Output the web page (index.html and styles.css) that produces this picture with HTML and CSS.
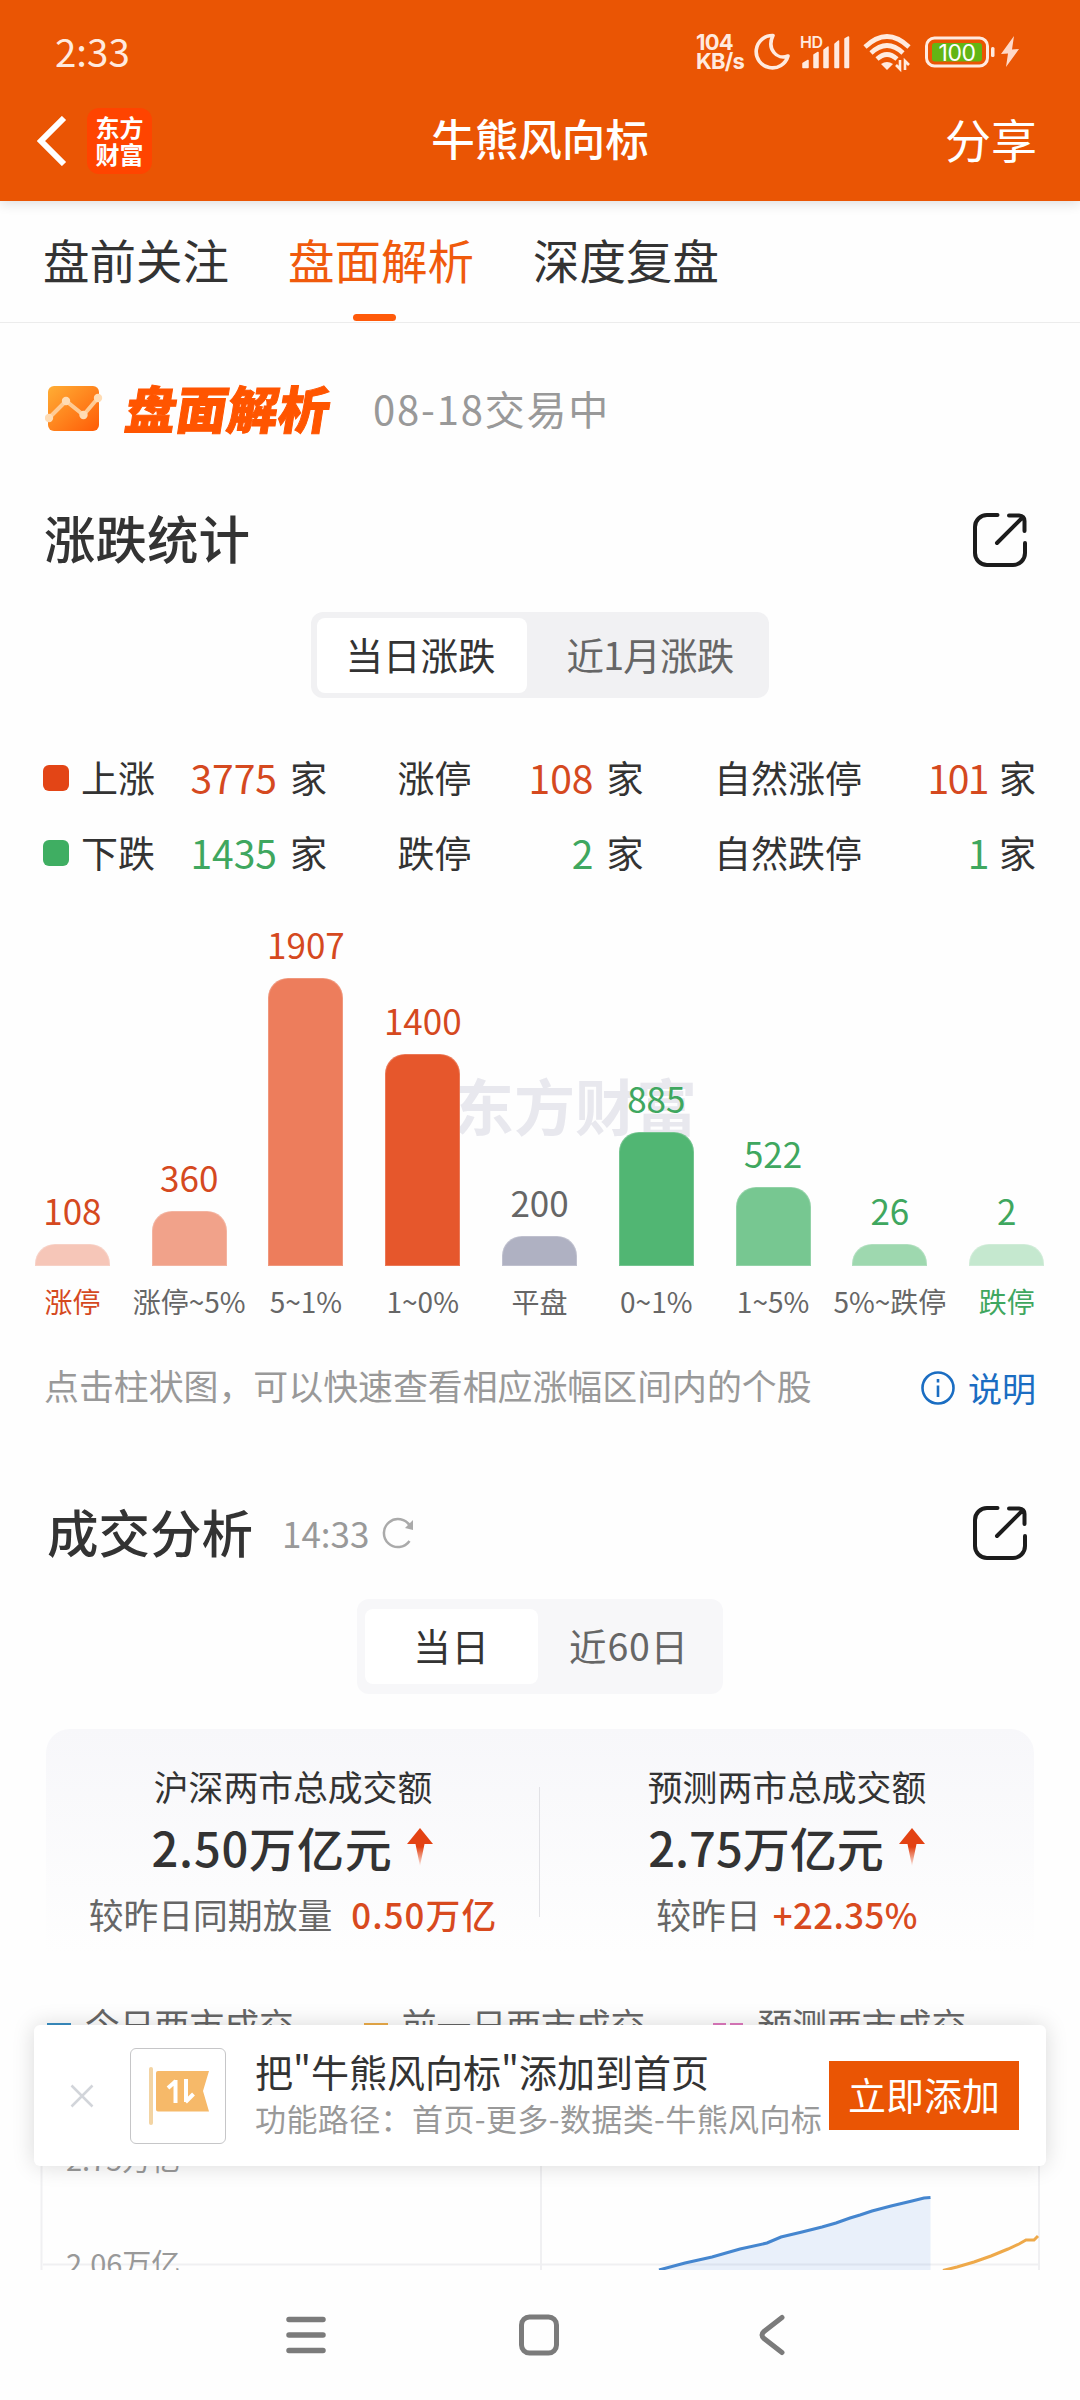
FILE: index.html
```html
<!DOCTYPE html>
<html lang="zh-CN">

<head>
    <meta charset="UTF-8">
    <meta name="viewport" content="width=device-width, initial-scale=1.0">
    <title>牛熊风向标</title>
    <link rel="stylesheet" href="styles.css">
</head>

<body>
    <div class="app">
        <header class="header">
            <div class="status-bar">
                <span class="time">2:33</span>
                <div class="status-icons">
                    <div class="net-speed"><span>104</span><span>KB/s</span></div>
                    <svg class="icon-moon" width="36" height="38" viewBox="0 0 36 38" fill="none" stroke="#ffeadf" stroke-width="3.600" stroke-linejoin="round"><path d="M19 2.500A16.200 16.200 0 1 0 34 23C23 27.500 12.500 16 19 2.500Z"/></svg>
                    <svg class="icon-signal" width="52" height="34" viewBox="0 0 52 34" fill="#ffeadf">
                        <text x="0" y="13" font-size="16" font-weight="600">HD</text>
                        <path d="M3 32.500v-4l5-3v7zM14 32.500V20l4-2.500v15zM24 32.500V15l4-3v20.500zM35 32.500V9l3.500-3v26.500zM45 32.500V4l3.500-2v30.500z" stroke="#ffeadf" stroke-width="1.500" stroke-linejoin="round"/>
                    </svg>
                    <svg class="icon-wifi" width="48" height="38" viewBox="0 0 48 38" fill="none" stroke="#ffeadf" stroke-width="4.600">
                        <path d="M2 14Q24 -7 46 14M8 20Q24 5 40 20M14 26Q24 17 34 26"/>
                        <path d="M18 31Q24 27 30 31L24 37Z" fill="#ffeadf" stroke="none"/>
                        <path d="M37 27v9l-4-4M42 37v-9l4 4" stroke-width="2.600"/>
                    </svg>
                    <svg class="icon-battery" width="70" height="32" viewBox="0 0 70 32">
                        <rect x="1.500" y="2" width="61" height="28" rx="8" fill="none" stroke="#ffeadf" stroke-width="3"/>
                        <rect x="7" y="7" width="50" height="18.500" rx="3" fill="#62b514"/>
                        <rect x="66" y="11" width="3.500" height="10" rx="1.500" fill="#ffeadf"/>
                        <text x="32" y="24.500" text-anchor="middle" font-size="23" fill="#fff">100</text>
                    </svg>
                    <svg class="icon-bolt" width="18" height="32" viewBox="0 0 18 32" fill="#ffd9c8"><path d="M13 0L0 18l7-.5L5 31 18 13l-7 .5z"/></svg>
                </div>
            </div>
            <div class="nav-bar">
                <div class="nav-left">
                    <svg width="30" height="50" viewBox="0 0 30 50" fill="none" stroke="#fff" stroke-width="6"><path d="M27 2L4 25l23 23"/></svg>
                    <div class="logo"><span>东方</span><span>财富</span></div>
                </div>
                <h1>牛熊风向标</h1>
                <span class="share">分享</span>
            </div>
        </header>

        <nav class="tabs">
            <a>盘前关注</a>
            <a class="active">盘面解析</a>
            <a>深度复盘</a>
        </nav>

        <div class="page-title">
            <svg width="58" height="48" viewBox="0 0 58 48">
                <defs>
                    <linearGradient id="iconFill" x1="0" y1="0" x2="1" y2="1">
                        <stop offset="0" stop-color="#ffae35"/>
                        <stop offset="1" stop-color="#ff5b06"/>
                    </linearGradient>
                </defs>
                <rect x="3" y="1" width="51" height="45" rx="6" fill="url(#iconFill)"/>
                <path d="M4 33L21 16l17.500 14L53 13" fill="none" stroke="#ffcb94" stroke-width="4"/>
                <g fill="#ffdcb4"><circle cx="4" cy="33" r="4.200"/><circle cx="21" cy="16" r="4.200"/><circle cx="38.500" cy="30" r="4.200"/><circle cx="53" cy="13" r="4.200"/></g>
            </svg>
            <strong>盘面解析</strong>
            <span>08-18交易中</span>
        </div>

        <section class="rise-fall">
            <div class="section-head">
                <h2>涨跌统计</h2>
                <svg class="icon-open" width="54" height="54" viewBox="0 0 54 54"><path d="M24.500 2H14A12 12 0 0 0 2 14V40A12 12 0 0 0 14 52H40A12 12 0 0 0 52 40V30M36 2.500H46Q51.500 3 51.500 8V18M50 4L24 30"/></svg>
            </div>
            <div class="segment">
                <span class="on">当日涨跌</span>
                <span>近1月涨跌</span>
            </div>

            <div class="counts">
                <div class="count-row up">
                    <div class="count first"><i></i><span>上涨</span><b>3775</b><span>家</span></div>
                    <div class="count second"><span>涨停</span><b>108</b><span>家</span></div>
                    <div class="count third"><span>自然涨停</span><b>101</b><span>家</span></div>
                </div>
                <div class="count-row down">
                    <div class="count first"><i></i><span>下跌</span><b>1435</b><span>家</span></div>
                    <div class="count second"><span>跌停</span><b>2</b><span>家</span></div>
                    <div class="count third"><span>自然跌停</span><b>1</b><span>家</span></div>
                </div>
            </div>

            <div class="bar-chart">
                <div class="watermark">东方财富</div>
                <div class="col red"><b>108</b><div class="bar r1" style="height: 22px"></div><span class="red">涨停</span></div>
                <div class="col red"><b>360</b><div class="bar r2" style="height: 55px"></div><span>涨停~5%</span></div>
                <div class="col red"><b>1907</b><div class="bar r3" style="height: 288px"></div><span>5~1%</span></div>
                <div class="col red"><b>1400</b><div class="bar r4" style="height: 212px"></div><span>1~0%</span></div>
                <div class="col"><b>200</b><div class="bar flat" style="height: 30px"></div><span>平盘</span></div>
                <div class="col green"><b>885</b><div class="bar g4" style="height: 134px"></div><span>0~1%</span></div>
                <div class="col green"><b>522</b><div class="bar g3" style="height: 79px"></div><span>1~5%</span></div>
                <div class="col green"><b>26</b><div class="bar g2" style="height: 22px"></div><span>5%~跌停</span></div>
                <div class="col green"><b>2</b><div class="bar g1" style="height: 22px"></div><span class="green">跌停</span></div>
            </div>

            <div class="hint">
                <span>点击柱状图，可以快速查看相应涨幅区间内的个股</span>
                <a>
                    <svg width="34" height="34" viewBox="0 0 34 34" fill="none" stroke="#1a6dc2" stroke-width="2.600"><circle cx="17" cy="17" r="15.500"/><path d="M17 14.500V26M17 8v3.500"/></svg>
                    <span>说明</span>
                </a>
            </div>
        </section>

        <section class="turnover">
            <div class="section-head">
                <h2>成交分析</h2>
                <span class="update-time">14:33</span>
                <svg class="icon-refresh" width="34" height="32" viewBox="0 0 34 32" fill="none" stroke="#aaa" stroke-width="2.500"><path d="M28.500 24A14 14 0 1 1 29 9"/><path d="M32 3v10l-8-2z" fill="#aaa" stroke="none"/></svg>
                <svg class="icon-open" width="54" height="54" viewBox="0 0 54 54"><path d="M24.500 2H14A12 12 0 0 0 2 14V40A12 12 0 0 0 14 52H40A12 12 0 0 0 52 40V30M36 2.500H46Q51.500 3 51.500 8V18M50 4L24 30"/></svg>
            </div>
            <div class="segment light">
                <span class="on">当日</span>
                <span>近60日</span>
            </div>

            <div class="summary">
                <div class="summary-item">
                    <div class="label">沪深两市总成交额</div>
                    <div class="amount wide">2.50万亿元
                        <svg width="28" height="40" viewBox="0 0 28 40">
                            <defs>
                                <linearGradient id="arrowFill" x1="0" y1="0" x2="0" y2="1">
                                    <stop offset="0.500" stop-color="#e34213"/>
                                    <stop offset="1" stop-color="#e34213" stop-opacity="0.100"/>
                                </linearGradient>
                            </defs>
                            <path d="M14 1L27 17H18.500L14 39 9.500 17H1z" fill="url(#arrowFill)"/>
                        </svg>
                    </div>
                    <div class="compare wide">较昨日同期放量 <b>0.50万亿</b></div>
                </div>
                <div class="summary-item">
                    <div class="label">预测两市总成交额</div>
                    <div class="amount">2.75万亿元
                        <svg width="28" height="40" viewBox="0 0 28 40"><path d="M14 1L27 17H18.500L14 39 9.500 17H1z" fill="url(#arrowFill)"/></svg>
                    </div>
                    <div class="compare">较昨日 <b>+22.35%</b></div>
                </div>
            </div>

            <div class="legend">
                <span class="today"><i></i>今日两市成交</span>
                <span class="prev"><i></i>前一日两市成交</span>
                <span class="forecast"><i></i>预测两市成交</span>
            </div>
            <svg class="line-chart" width="1080" height="224" viewBox="0 2046 1080 224">
                <path d="M41.500 2046V2270M541 2046V2270M1039 2046V2270M43 2161H1039M43 2264.500H1039" stroke="#f0f0f2" stroke-width="2" fill="none"/>
                <path d="M659 2270L685 2263 712 2257 740 2249 767 2243 781 2237 802 2232 822 2227 836 2223 850 2218 860 2215 872 2211 891 2206 912 2201 924 2198 930.500 2197.500V2270z" fill="#3f83dc" fill-opacity="0.110"/>
                <path d="M659 2270L685 2263 712 2257 740 2249 767 2243 781 2237 802 2232 822 2227 836 2223 850 2218 860 2215 872 2211 891 2206 912 2201 924 2198 930.500 2197.500" fill="none" stroke="#4586cf" stroke-width="3"/>
                <path d="M943 2270.500L957 2267 974 2262 991 2256 1008 2249 1019 2244 1026 2240H1034L1038 2236" fill="none" stroke="#eea94a" stroke-width="3"/>
                <g fill="#999" font-size="29">
                    <text x="66" y="2171">2.75万亿</text>
                    <text x="66" y="2275">2.06万亿</text>
                </g>
            </svg>
        </section>

        <footer class="system-nav">
            <svg width="40" height="42" viewBox="0 0 40 42" stroke="#7b7b7b" stroke-width="5.500" stroke-linecap="round"><path d="M3 5.500H37M3 21H37M3 36.500H37"/></svg>
            <svg class="home" width="42" height="42" viewBox="0 0 42 42" fill="none" stroke="#7b7b7b" stroke-width="5"><rect x="3.500" y="3" width="35" height="36" rx="8"/></svg>
            <svg width="28" height="42" viewBox="0 0 28 42" fill="none" stroke="#7b7b7b" stroke-width="5" stroke-linecap="round"><path d="M24 3.500L6 17.500Q2 21 6 24.500L24 38.500"/></svg>
        </footer>

        <!-- floating "add to home" prompt -->
        <div class="add-banner">
            <svg class="close" width="24" height="24" viewBox="0 0 24 24" stroke="#d2d5da" stroke-width="2.500"><path d="M1.500 1.500l21 21M22.500 1.500l-21 21"/></svg>
            <div class="flag">
                <svg width="62" height="58" viewBox="0 0 62 58">
                    <rect x="1" y="0" width="4" height="58" rx="2" fill="#f3d4a3"/>
                    <path d="M8 6Q8 4 10 4H61L55 24 61 44.500H10Q8 44.500 8 42.500z" fill="#f6b969"/>
                    <path d="M27.500 13v23M28 14l-8 7M38 12v23M37.500 35l8-8" fill="none" stroke="#fff" stroke-width="4"/>
                </svg>
            </div>
            <div class="banner-text">
                <p class="main">把"牛熊风向标"添加到首页</p>
                <p class="path">功能路径：首页-更多-数据类-牛熊风向标</p>
            </div>
            <button>立即添加</button>
        </div>
    </div>
</body>

</html>
```
FILE: styles.css
```css
* {
    box-sizing: border-box;
    margin: 0;
    padding: 0;
}

body {
    font-family: "Noto Sans CJK SC", "Noto Sans", sans-serif;
    background: #fff;
    color: #333;
}

svg {
    display: block;
    flex-shrink: 0;
}

i {
    display: block;
}

b {
    font-weight: 400;
}

.app {
    position: relative;
    width: 1080px;
    height: 2400px;
    overflow: hidden;
    background: #fefefe;
    white-space: nowrap;
}

/* header */
.header {
    height: 201px;
    background: #ea5504;
    color: #fff;
    box-shadow: 0 2px 12px rgba(0, 0, 0, 0.14);
}

.status-bar {
    display: flex;
    justify-content: space-between;
    align-items: center;
    height: 80px;
    padding: 24px 61px 0 55px;
    color: #ffeadf;
}

.time {
    padding-bottom: 4px;
    font-size: 38.500px;
    line-height: 40px;
}

.status-icons {
    display: flex;
    align-items: center;
}

.status-icons svg {
    overflow: visible;
}

.net-speed {
    display: flex;
    flex-direction: column;
    width: 58px;
    padding-bottom: 1px;
    font-family: Inter, sans-serif;
    font-size: 22px;
    font-weight: 700;
    letter-spacing: -0.800px;
    line-height: 19px;
}

.icon-signal {
    margin-left: 10px;
}

.icon-signal text,
.icon-battery text {
    font-family: Inter, sans-serif;
    letter-spacing: -0.500px;
}

.icon-wifi {
    margin-left: 11px;
}

.icon-battery {
    margin-left: 14px;
}

.icon-bolt {
    margin-left: 6px;
}

.nav-bar {
    display: grid;
    grid-template-columns: 1fr auto 1fr;
    align-items: center;
    height: 121px;
    padding: 0 43px 0 37px;
}

.nav-left {
    display: flex;
    align-items: center;
    gap: 20px;
}

.nav-bar h1 {
    padding: 0 0 5px 6px;
    font-size: 43.500px;
    font-weight: 500;
    line-height: 50px;
}

.logo {
    display: flex;
    flex-direction: column;
    justify-content: center;
    align-items: center;
    width: 65px;
    height: 66px;
    padding-bottom: 2px;
    border-radius: 12px;
    background: #ff4400;
    font-size: 24px;
    font-weight: 700;
    line-height: 27px;
}

.share {
    justify-self: end;
    padding-bottom: 5px;
    font-size: 46px;
    line-height: 50px;
}

/* tabs */
.tabs {
    display: flex;
    gap: 59px;
    height: 122px;
    padding-left: 43px;
    border-bottom: 1px solid #ececec;
    font-size: 46.500px;
    line-height: 116px;
}

.tabs a {
    display: flex;
    flex-direction: column;
    align-items: center;
    height: 121px;
}

.tabs .active {
    color: #f05a0c;
}

.tabs .active::after {
    content: "";
    width: 43px;
    height: 7px;
    margin: -3px 14px 0 0;
    border-radius: 4px;
    background: #ff5a0a;
}

.page-title {
    display: flex;
    align-items: center;
    height: 172px;
    padding-left: 45px;
}

.page-title strong {
    margin-left: 23px;
    padding-bottom: 5px;
    font-size: 51px;
    font-weight: 900;
    line-height: 60px;
    color: #ff5500;
    -webkit-text-stroke: 1px #ff5500;
    transform: skewX(-9deg);
}

.page-title span {
    margin-left: 43px;
    padding-bottom: 3px;
    font-size: 40px;
    letter-spacing: 1.800px;
    line-height: 50px;
    color: #999;
}

/* sections */
.section-head {
    display: flex;
    align-items: center;
    height: 88px;
    padding: 0 53px 0 44px;
}

.section-head h2 {
    padding-bottom: 4px;
    font-size: 51.500px;
    font-weight: 500;
    line-height: 60px;
}

.icon-open {
    margin-left: auto;
    margin-top: 2px;
    fill: none;
    stroke: #1c1c1c;
    stroke-width: 4;
    stroke-linecap: round;
}

.turnover .icon-open {
    margin-top: 0;
}

.segment {
    display: flex;
    width: 458px;
    height: 86px;
    margin: 29px auto 0 311px;
    padding: 6px;
    border-radius: 12px;
    background: #f1f1f3;
    font-size: 37.500px;
    line-height: 71px;
    text-align: center;
    color: #666;
}

.segment span {
    flex: 1;
    height: 75px;
    padding-left: 10px;
    letter-spacing: -0.800px;
}

.segment .on {
    flex: none;
    width: 210px;
    padding: 0 3px 0 0;
    border-radius: 8px;
    letter-spacing: 0;
    background: #fff;
    color: #333;
}

.segment.light {
    width: 366px;
    height: 95px;
    margin: 22px auto 0 357px;
    padding: 10px 8px;
    background: #f7f7f9;
}

.segment.light span {
    padding-left: 5px;
    letter-spacing: 0.800px;
}

.segment.light .on {
    width: 173px;
    padding: 0;
}

/* up / down counts */
.counts {
    margin-top: 43px;
}

.count-row {
    display: flex;
    justify-content: space-between;
    height: 75px;
    padding: 0 44px 0 43px;
    font-size: 37px;
    line-height: 72px;
}

.count {
    display: flex;
}

.count b {
    flex: 1;
    padding-right: 13px;
    text-align: right;
    font-size: 39px;
}

.count i {
    width: 26px;
    height: 26px;
    margin: 24px 12px 0 0;
    border-radius: 6px;
}

.first {
    width: 284px;
}

.second {
    width: 246px;
}

.third {
    width: 322px;
}

.count-row .third b {
    padding-right: 11px;
    letter-spacing: -1.500px;
}

.up i {
    background: #e34516;
}

.up b,
.red {
    color: #d5491f;
}

.down i {
    background: #3fae62;
}

.down b,
.green {
    color: #3fa75f;
}

/* bar chart */
.bar-chart {
    position: relative;
    display: flex;
    height: 431px;
    padding: 0 15px 0 14px;
}

.watermark {
    position: absolute;
    left: 453px;
    top: 178px;
    font-size: 61px;
    font-weight: 700;
    line-height: 72px;
    color: #e8e8ee;
}

.col {
    position: relative;
    flex: 1;
    display: flex;
    flex-direction: column;
    justify-content: flex-end;
    align-items: center;
}

.col b {
    margin-bottom: 11px;
    font-size: 35px;
    line-height: 46px;
}

.col span {
    height: 40px;
    margin-top: 16px;
    font-size: 28px;
    line-height: 39px;
}

.col span:not(.red):not(.green),
.col:not(.red):not(.green) b {
    color: #666;
}

.bar {
    width: 75px;
    border: 1px solid rgba(255, 255, 255, 0.2);
    border-radius: 20px 20px 0 0;
}

.r1 { background: #f6c6b8; }
.r2 { background: #f1a28a; }
.r3 { background: #ed7d5c; }
.r4 { background: #e6572c; }
.flat { background: #afb1c2; }
.g4 { background: #51b673; }
.g3 { background: #77c791; }
.g2 { background: #9ed8af; }
.g1 { background: #c5e8cf; }

.hint {
    display: flex;
    justify-content: space-between;
    align-items: center;
    height: 50px;
    margin: 40px 44px 77px;
    font-size: 34.900px;
    line-height: 46px;
    color: #999;
}

.hint > span {
    padding-bottom: 4px;
}

.hint a {
    display: flex;
    align-items: center;
    gap: 13px;
    padding-top: 2px;
    font-size: 34px;
    color: #1a6dc2;
}

/* turnover */
.turnover .section-head {
    padding-left: 47px;
}

.update-time {
    margin-left: 29px;
    padding-bottom: 2px;
    font-size: 35px;
    color: #999;
}

.icon-refresh {
    margin-left: 12px;
}

.summary {
    display: flex;
    width: 988px;
    height: 224px;
    margin: 35px auto 0 46px;
    padding-top: 35px;
    border-radius: 24px 24px 0 0;
    background: linear-gradient(#f7f7fa, #fefefe);
}

.summary-item {
    flex: 1;
    display: flex;
    flex-direction: column;
    align-items: center;
}

.summary-item + .summary-item {
    position: relative;
}

.summary-item + .summary-item::before {
    content: "";
    position: absolute;
    left: -1px;
    top: 23px;
    width: 1px;
    height: 130px;
    background: #e2e2e6;
}

.label {
    font-size: 34.800px;
    line-height: 44px;
}

.amount {
    display: flex;
    align-items: center;
    gap: 14px;
    margin-top: 9px;
    font-size: 47px;
    font-weight: 500;
    line-height: 60px;
}

.amount.wide {
    letter-spacing: 0.800px;
}

.compare {
    display: flex;
    gap: 12px;
    margin-top: 15px;
    font-size: 34.800px;
    line-height: 44px;
    color: #666;
}

.compare.wide {
    gap: 19px;
}

.compare b {
    font-weight: 500;
    letter-spacing: 0.400px;
    color: #d84a1e;
}

.compare.wide b {
    letter-spacing: 1.100px;
}

.legend {
    display: flex;
    height: 40px;
    margin: 53px 47px 0;
    font-size: 34.800px;
    line-height: 36px;
    color: #666;
}

.legend span {
    display: flex;
    gap: 14px;
}

.legend i {
    width: 24px;
    height: 4px;
    margin-top: 17px;
    background: #3a8fc4;
}

.legend .prev {
    margin-left: 70px;
}

.legend .prev i {
    background: #eeae4a;
}

.legend .forecast {
    margin-left: 68px;
}

.legend .forecast i {
    width: 30px;
    background: linear-gradient(90deg, #e07bc0 13px, transparent 13px, transparent 17px, #e07bc0 17px);
}

.system-nav {
    display: flex;
    align-items: center;
    height: 130px;
    padding: 0 294px 0 286px;
    justify-content: space-between;
}

.system-nav .home {
    margin-right: 6px;
}

/* floating banner */
.add-banner {
    position: absolute;
    left: 34px;
    top: 2025px;
    display: flex;
    align-items: center;
    width: 1012px;
    height: 141px;
    padding: 0 27px 0 36px;
    border-radius: 6px;
    background: #fff;
    box-shadow: 0 0 22px rgba(0, 0, 0, 0.15);
}

.flag {
    display: flex;
    align-items: center;
    width: 96px;
    height: 96px;
    margin-left: 36px;
    padding-left: 17px;
    border: 1px solid #c6c6c8;
    border-radius: 6px;
}

.banner-text {
    flex: 1;
    width: 0;
    margin-left: 29px;
    padding-bottom: 5px;
}

.banner-text .main {
    font-size: 38px;
    line-height: 50px;
}

.banner-text .path {
    font-size: 31px;
    line-height: 44px;
    letter-spacing: 0.400px;
    color: #999;
}

.add-banner button {
    width: 190px;
    height: 69px;
    padding-bottom: 4px;
    border: none;
    background: #ea5504;
    font-family: inherit;
    font-size: 38px;
    line-height: 62px;
    color: #fff;
}
```
